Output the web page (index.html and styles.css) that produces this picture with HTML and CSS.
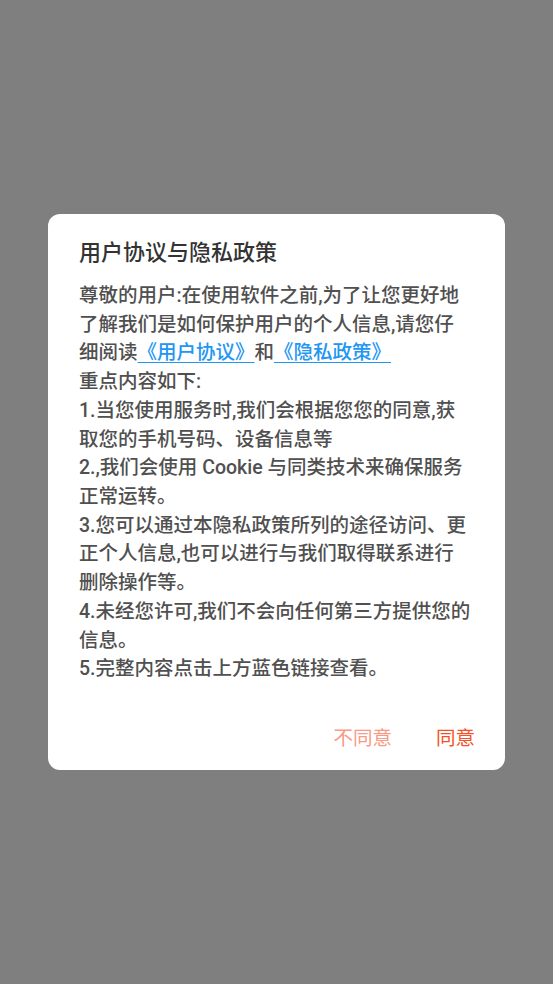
FILE: index.html
```html
<!DOCTYPE html>
<html lang="zh-CN">
<head>
  <meta charset="UTF-8" />
  <meta name="viewport" content="width=device-width, initial-scale=1.0" />
  <title>用户协议与隐私政策</title>
  <link rel="stylesheet" href="styles.css">
</head>
<body>
  <!-- Privacy dialog -->
  <div class="dialog">
    <h2 class="dialog-title">用户协议与隐私政策</h2>
    <div class="dialog-body">
      <p>尊敬的用户:在使用软件之前,为了让您更好地了解我们是如何保护用户的个人信息,请您仔细阅读<a href="#" class="link">《用户协议》</a>和<a href="#" class="link">《隐私政策》</a></p>
      <p>重点内容如下:</p>
      <p>1.当您使用服务时,我们会根据您您的同意,获取您的手机号码、设备信息等</p>
      <p>2.,我们会使用 Cookie 与同类技术来确保服务正常运转。</p>
      <p>3.您可以通过本隐私政策所列的途径访问、更正个人信息,也可以进行与我们取得联系进行删除操作等。</p>
      <p>4.未经您许可,我们不会向任何第三方提供您的信息。</p>
      <p>5.完整内容点击上方蓝色链接查看。</p>
    </div>
    <div class="dialog-actions">
      <button class="btn btn-disagree">不同意</button>
      <button class="btn btn-agree">同意</button>
    </div>
  </div>
</body>
</html>
```

FILE: styles.css
```css
body {
  margin: 0;
  background-color: #7f7f7f;
  display: flex;
  justify-content: center;
  align-items: center;
  height: 100vh;
  font-family: Roboto, "Noto Sans CJK SC", sans-serif;
}
/* Dialog card */
.dialog {
  width: 457px;
  box-sizing: border-box;
  background: #fff;
  border-radius: 12px;
  padding: 24px 32px 17px 31px;
}
.dialog-title {
  margin: 0;
  font-size: 22px;
  line-height: 30px;
  font-weight: 500;
  color: #333;
}
.dialog-body {
  margin-top: 14px;
  font-size: 19.5px;
  line-height: 28.7px;
  font-weight: 500;
  color: #505050;
}
.dialog-body p {
  margin: 0;
}
.link {
  color: #2196f3;
  text-decoration: underline;
  text-underline-offset: 3px;
}
/* Buttons */
.dialog-actions {
  display: flex;
  justify-content: flex-end;
  gap: 44px;
  margin-top: 41px;
  margin-right: -2px;
}
.btn {
  background: none;
  border: none;
  padding: 0;
  font-family: inherit;
  font-size: 19.5px;
  line-height: 28px;
  cursor: pointer;
}
.btn-disagree {
  color: #f99a85;
}
.btn-agree {
  color: #f4502a;
}
```
